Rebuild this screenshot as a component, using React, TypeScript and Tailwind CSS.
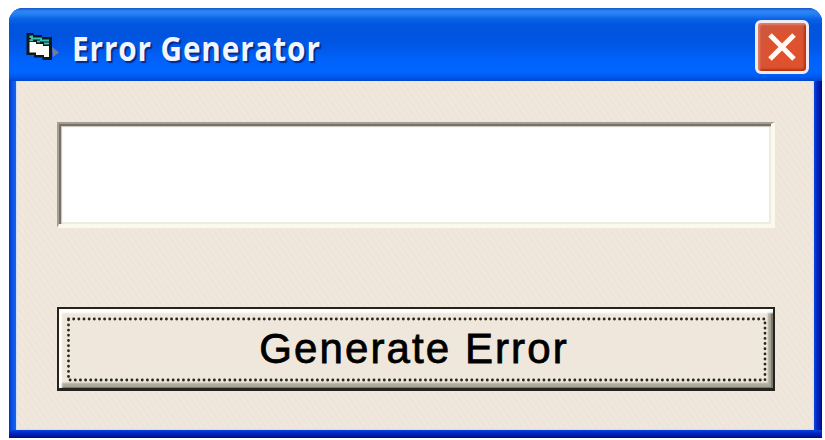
import React from 'react';

function FormIcon() {
  return (
    <svg className="h-8 w-9 shrink-0" viewBox="0 0 36 32" aria-hidden="true">
      <path d="M27 15 34 20.5 28 25Z" fill="#76799a" />
      <path d="M1.5 1H8.5V3H17V5H27V28H17.5V25.5H9V23H1.5Z" fill="#0d1820" />
      <path d="M4.5 10H11V12H18V14H24V25H19V23H11V20.5H4.5Z" fill="#fffdf8" />
      <path d="M4.5 3.5H8V5.5H17V7.5H24V9.5H15V7.5H6V6H4.5Z" fill="#36c4ac" />
      <path d="M4.5 8.3H8M12 9.5H15M19 11.5H24" fill="none" stroke="#36c4ac" strokeWidth="2" />
    </svg>
  );
}

function TitleBar() {
  return (
    <header className="flex h-[73px] shrink-0 items-start bg-[linear-gradient(180deg,#1557c4_0px,#2c86f8_3px,#2680f5_6px,#0a62e6_11px,#0055dd_17px,#0054df_28px,#0059ea_40px,#0062fa_52px,#0065ff_64px,#005cf2_68px,#0048cf_73px)] pl-4 pr-[13px]">
      <div className="mt-6">
        <FormIcon />
      </div>
      <h1 className="ml-[11px] mt-[17px] origin-left scale-x-[0.874] whitespace-nowrap font-['Open_Sans','Noto_Sans',sans-serif] text-[34px] font-bold leading-[46px] tracking-[1px] text-[#f1f5ff] [text-shadow:2px_2px_1px_#06298b]">
        Error Generator
      </h1>
      <button
        aria-label="Close"
        className="ml-auto mt-3 flex h-[54px] w-[54px] shrink-0 items-center justify-center rounded-[6px] border-[3px] border-[#f3e9f0] bg-[radial-gradient(circle_at_60%_65%,#e4502a_0%,#dc5230_45%,#cf573c_75%,#c55543_100%)] shadow-[inset_2px_2px_2px_#df7e68,inset_-2px_-2px_2px_#b63510]"
      >
        <svg className="size-[30px]" viewBox="0 0 30 30" aria-hidden="true">
          <path d="M3 3 27 27M27 3 3 27" stroke="#fffaf3" strokeWidth="5" />
        </svg>
      </button>
    </header>
  );
}

function FocusOutline() {
  return (
    <svg className="absolute left-[7px] top-[7px] h-[66px] w-[702px]" viewBox="0 0 702 66" aria-hidden="true">
      <rect
        x="2.5"
        y="3"
        width="696.5"
        height="61"
        fill="none"
        stroke="#29271f"
        strokeWidth="2.8"
        strokeLinecap="round"
        strokeDasharray="0.1 5.05"
      />
    </svg>
  );
}

export default function App() {
  return (
    <div className="h-[440px] w-[825px] overflow-hidden bg-white pl-[9px] pt-2">
      <main className="flex h-[430px] w-[813px] flex-col overflow-hidden rounded-t-[14px] bg-[#0030d0]">
        <TitleBar />
        <div className="flex h-[349px]">
          <div className="w-[7px] shrink-0 bg-[linear-gradient(90deg,#0030cf_0px,#0753e5_3px,#1765ee_7px)]" />
          <div className="h-[349px] w-[798px] bg-[#efe6db] bg-[repeating-linear-gradient(55deg,#ece1d540_0px,#ece1d540_2px,#f5ece340_3px,#f5ece340_5px)] shadow-[inset_1px_-1px_1px_#cbdcfa,inset_-1px_0px_1px_#cbdcfa]">
            <div className="ml-[41px] mt-[41px] w-[718px]">
              <input
                aria-label="Error text"
                className="block h-[106px] w-[718px] border-b-[4px] border-l-[2px] border-r-[4px] border-t-[2px] border-b-[#fbf8ed] border-l-[#a39e92] border-r-[#fbf8ed] border-t-[#a39e92] bg-white shadow-[inset_2px_2px_0px_#77716a,inset_3px_3px_1px_#c8c4ba,inset_-2px_-2px_1px_#eeece0] outline-none"
              />
              <button className="relative mt-[79px] flex h-[84px] w-[718px] items-center justify-center border-b-[3px] border-l-[2px] border-r-[2px] border-t-[2px] border-[#24231e] bg-[#efe7db] shadow-[inset_3px_4px_2px_#ffffff,inset_-2px_-1px_1px_#77756a,inset_-5px_-5px_2px_#aba99b]">
                <FocusOutline />
                <span className="mr-1 whitespace-nowrap font-['Liberation_Sans',sans-serif] text-[42px] leading-[48px] tracking-[2.1px] text-black [-webkit-text-stroke:0.8px_black]">
                  Generate Error
                </span>
              </button>
            </div>
          </div>
          <div className="flex-1 bg-[linear-gradient(90deg,#0e49df_0px,#0026c4_3px,#0019a3_6px,#000b6c_8px)]" />
        </div>
        <div className="h-2 bg-[linear-gradient(180deg,#0a43dc_0px,#0026c4_3px,#0019a3_6px,#000d74_8px)]" />
      </main>
    </div>
  );
}
